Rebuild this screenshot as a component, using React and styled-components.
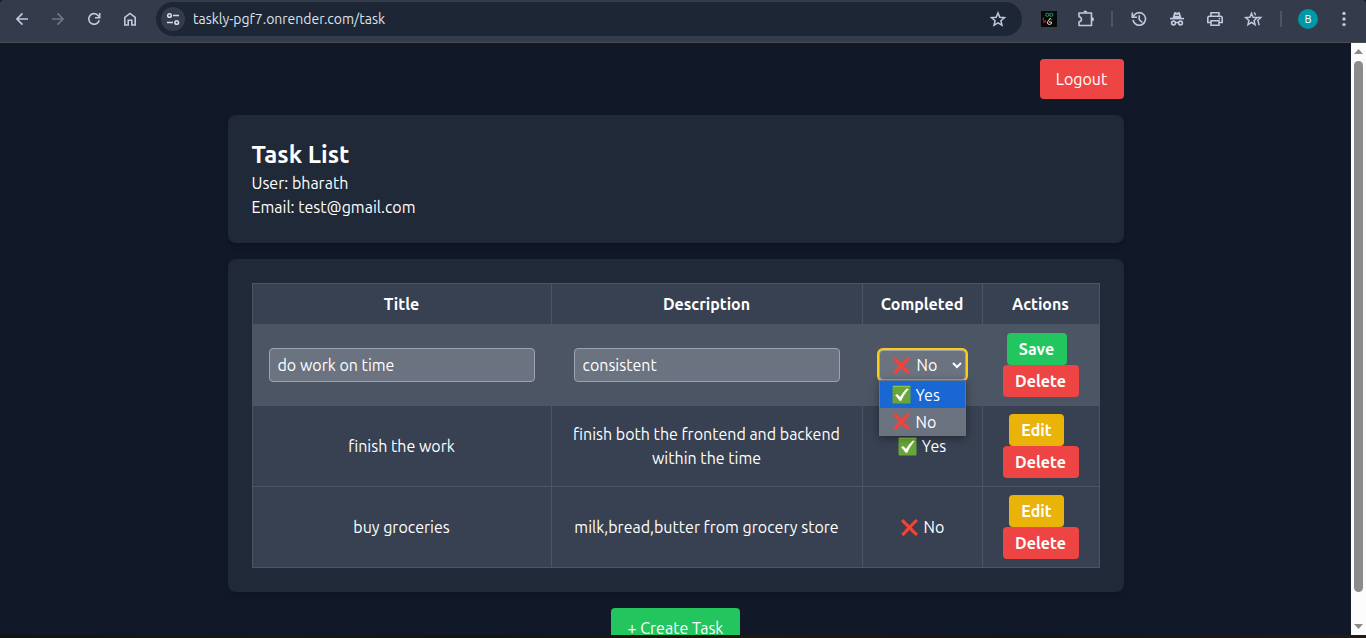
import React, { useState } from "react";
import styled, { createGlobalStyle, css } from "styled-components";

const GlobalStyle = createGlobalStyle`
  *, *::before, *::after { box-sizing: border-box; }
  body {
    margin: 0;
    background: #111827;
    color: #ffffff;
    font: 16px/24px Ubuntu, "Noto Sans", "Open Sans", sans-serif;
  }
  button, input, select { font: inherit; color: inherit; margin: 0; }
  h1, p { margin: 0; }
`;

const Window = styled.div`
  display: flex;
  flex-direction: column;
  height: 100vh;
  overflow: hidden;
`;

/* Browser toolbar */
const Toolbar = styled.header`
  display: flex;
  align-items: center;
  flex: none;
  padding: 2px 4px 6px;
  background: #343c4c;
  border-bottom: 1px solid #4b4d50;
  border-radius: 4px 4px 0 0;
`;

const ToolButton = styled.button`
  display: flex;
  align-items: center;
  justify-content: center;
  flex: none;
  width: ${(p) => (p.$wide ? 38 : 36)}px;
  height: 34px;
  padding: 0;
  border: 0;
  background: none;
  color: ${(p) => (p.$dim ? "#6f7787" : "#c0c9dd")};
`;

const AddressBar = styled.div`
  display: flex;
  align-items: center;
  flex: 1;
  min-width: 0;
  height: 34px;
  margin: 0 8px;
  padding: 0 6px 0 5px;
  border-radius: 17px;
  background: #1d2635;
`;

const SiteInfo = styled.button`
  display: flex;
  flex: none;
  padding: 2px;
  border: 0;
  border-radius: 50%;
  background: #343c4c;
  color: #d5dbe8;
`;

const Address = styled.input`
  flex: 1;
  min-width: 0;
  padding: 0 8px;
  border: 0;
  outline: 0;
  background: none;
  color: #dde2ec;
  font-size: 14px;
`;

const Separator = styled.span`
  flex: none;
  width: 2px;
  height: 16px;
  margin: 0 ${(p) => p.$gap}px;
  background: #4c5568;
`;

const Avatar = styled.span`
  width: 20px;
  height: 20px;
  border-radius: 50%;
  background: #0097a7;
  color: #ffffff;
  font-size: 11px;
  line-height: 20px;
  text-align: center;
`;

/* Page */
const Viewport = styled.div`
  display: flex;
  flex: 1;
  min-height: 0;
`;

const Page = styled.main`
  display: flex;
  flex: 1;
  flex-direction: column;
  align-items: center;
  gap: 16px;
  min-width: 0;
  padding: 16px;
  overflow: hidden;
`;

const Row = styled.div`
  display: flex;
  flex: none;
  justify-content: ${(p) => p.$align};
  width: 100%;
  max-width: 896px;
`;

const MainButton = styled.button`
  width: ${(p) => p.$width}px;
  height: 40px;
  padding: 0;
  border: 0;
  border-radius: 4px;
  background: ${(p) => p.$color};
  white-space: nowrap;
`;

const Card = styled.section`
  flex: none;
  width: 100%;
  max-width: 896px;
  padding: 24px;
  border-radius: 8px;
  background: #1f2937;
  box-shadow: 0 4px 6px -1px rgba(0, 0, 0, 0.1), 0 2px 4px -2px rgba(0, 0, 0, 0.1);
`;

const Heading = styled.h1`
  font-size: 24px;
  line-height: 32px;
  font-weight: 700;
`;

const Table = styled.table`
  width: 100%;
  table-layout: fixed;
  border-collapse: collapse;
  background: #374151;
  text-align: center;
`;

const Column = styled.col`
  width: ${(p) => p.$width || "auto"};
`;

const TaskRow = styled.tr`
  ${(p) => p.$editing && css`background: #4b5563;`}
`;

const HeadCell = styled.th`
  padding: 8px 16px;
  border: 1px solid #4b5563;
  font-weight: 700;
`;

const Cell = styled.td`
  padding: 8px 16px;
  border: 1px solid #4b5563;
`;

const TextField = styled.input`
  display: block;
  width: 100%;
  max-width: 266px;
  height: 34px;
  margin: 0 auto;
  padding: 4px 8px;
  border: 1px solid #9ca3af;
  border-radius: 4px;
  outline: 0;
  background: #6b7280;
`;

const Actions = styled.div`
  display: flex;
  flex-direction: column;
  align-items: center;
`;

const actionColors = { save: "#22c55e", edit: "#eab308", delete: "#ef4444" };
const actionWidths = { save: 60, edit: 55, delete: 76 };

const ActionButton = styled.button`
  width: ${(p) => actionWidths[p.$kind]}px;
  height: 32px;
  margin-right: ${(p) => (p.$kind === "delete" ? 0 : 8)}px;
  padding: 0;
  border: 0;
  border-radius: 4px;
  background: ${(p) => actionColors[p.$kind]};
  font-weight: 700;
`;

const StatusLabel = styled.span`
  display: flex;
  align-items: center;
  justify-content: center;
  gap: 5px;
`;

const Picker = styled.div`
  position: relative;
  width: 87px;
  margin: 0 auto;
`;

const PickerSelect = styled.select`
  display: block;
  width: 100%;
  height: 30px;
  padding: 0 8px 0 37px;
  appearance: none;
  border: 1px solid #9ca3af;
  border-radius: 4px;
  outline: 0;
  background: #6b7280;
  box-shadow: 0 0 0 2px #facc15;
`;

const PickerMark = styled.span`
  position: absolute;
  top: 6px;
  left: 13px;
  display: flex;
  pointer-events: none;
`;

const PickerArrow = styled(PickerMark)`
  top: 10px;
  left: 72px;
`;

const Menu = styled.div`
  position: absolute;
  z-index: 1;
  top: 30px;
  left: 0;
  width: 100%;
  border: 1px solid #6b7280;
  background: #6b7280;
  box-shadow: 0 2px 8px rgba(0, 0, 0, 0.4);
`;

const MenuItem = styled.div`
  display: flex;
  align-items: center;
  gap: 5px;
  height: 27px;
  padding: 0 12px;
  ${(p) => p.$active && css`background: #1967d2;`}
`;

const ScrollTrack = styled.div`
  display: flex;
  flex: none;
  flex-direction: column;
  align-items: center;
  width: 15px;
  padding: 6px 0;
  background: #fcfcfc;
  color: #8b8b8b;
`;

const ScrollThumb = styled.div`
  flex: 1;
  width: 9px;
  margin: 7px 0 32px;
  border-radius: 5px;
  background: #8b8b8b;
`;

const DesktopEdge = styled.div`
  flex: none;
  height: 3px;
  background: linear-gradient(90deg, #10150f, #171a10 20%, #10170f 35%, #201910 55%, #17150f 75%, #211a15);
`;

function Icon({ children, fill = false }) {
  return (
    <svg width="20" height="20" viewBox="0 0 20 20" aria-hidden="true"
      fill={fill ? "currentColor" : "none"} stroke={fill ? "none" : "currentColor"} strokeWidth="1.6">
      {children}
    </svg>
  );
}

function CrossMark() {
  return (
    <svg width="19" height="19" viewBox="0 0 19 19" aria-hidden="true">
      <path d="M1 3.2 3.3 1c2 2.4 4 4.4 6.2 6.2C11.6 5 13.700 3 16 1l2 1.900c-2.300 2.200-4.400 4.400-6.300 6.700 2 2.300 4.100 4.400 6.300 6.200L15.900 18c-2.400-1.900-4.500-4-6.400-6.200C7.500 13.900 5.600 16 3.600 18.300L1.200 16c2.200-2.100 4.200-4.200 6-6.500C5.200 7.500 3.100 5.400 1 3.200Z" fill="#f44336" />
    </svg>
  );
}

function CheckMark() {
  return (
    <svg width="19" height="19" viewBox="0 0 19 19" aria-hidden="true">
      <rect x="0.500" y="0.500" width="18" height="18" rx="1" fill="#68a63a" />
      <path d="M1 1h17v1H1z" fill="#8bc34a" />
      <path d="m3.200 10.200 1.900-1.300 3 3.200c1.900-3.400 4-6.200 6.700-8.700l2 .5c-3.200 3.600-5.600 7.300-7.500 11.800H7.600c-1.200-2-2.700-3.700-4.400-5.500Z" fill="#fff" />
    </svg>
  );
}

function Status({ done }) {
  return (
    <StatusLabel>
      {done ? <CheckMark /> : <CrossMark />}
      {done ? "Yes" : "No"}
    </StatusLabel>
  );
}

function StatusPicker() {
  const [value, setValue] = useState("no");
  return (
    <Picker>
      <PickerSelect aria-label="Completed" value={value} onChange={(e) => setValue(e.target.value)}>
        <option value="yes">Yes</option>
        <option value="no">No</option>
      </PickerSelect>
      <PickerMark>{value === "yes" ? <CheckMark /> : <CrossMark />}</PickerMark>
      <PickerArrow>
        <svg width="12" height="10" viewBox="0 0 12 10" fill="none" stroke="#fff" strokeWidth="2" aria-hidden="true">
          <path d="m2 3 4 4 4-4" />
        </svg>
      </PickerArrow>
      <Menu role="listbox" aria-label="Completed">
        <MenuItem role="option" aria-selected="false" $active onClick={() => setValue("yes")}><CheckMark />Yes</MenuItem>
        <MenuItem role="option" aria-selected="true" onClick={() => setValue("no")}><CrossMark />No</MenuItem>
      </Menu>
    </Picker>
  );
}

function BrowserToolbar() {
  return (
    <Toolbar>
      <ToolButton aria-label="Back"><Icon><path d="M16 10H5M10.500 4.400 4.900 10l5.600 5.600" /></Icon></ToolButton>
      <ToolButton aria-label="Forward" $dim><Icon><path d="M4 10h11M9.500 4.400l5.600 5.600-5.600 5.600" /></Icon></ToolButton>
      <ToolButton aria-label="Reload">
        <Icon><path d="M15.200 11.200A5.300 5.300 0 1 1 13.800 6.200l1.700 1.900M15.700 4v4.700H11" /></Icon>
      </ToolButton>
      <ToolButton aria-label="Home">
        <Icon><path d="M4.800 16V8.300L10 4.400l5.200 3.900V16h-3.400v-4.800H8.200V16Z" /></Icon>
      </ToolButton>
      <AddressBar>
        <SiteInfo aria-label="Site information">
          <Icon>
            <circle cx="6.500" cy="6.500" r="1.800" />
            <path d="M10 6.500h6M4 13.500h6" />
            <circle cx="13.700" cy="13.500" r="1.800" />
          </Icon>
        </SiteInfo>
        <Address aria-label="Address" defaultValue="taskly-pgf7.onrender.com/task" />
        <ToolButton aria-label="Bookmark">
          <Icon><path d="m10 4 1.800 4.300 4.700.4-3.600 3.100 1.100 4.500-4-2.400-4 2.400 1.100-4.500-3.600-3.100 4.700-.4Z" strokeWidth="1.500" /></Icon>
        </ToolButton>
      </AddressBar>
      <ToolButton aria-label="Extension" $wide>
        <svg width="16" height="16" viewBox="0 0 16 16" fill="none" aria-hidden="true">
          <path d="M0 0h16v16H0z" fill="#090909" />
          <circle cx="6.300" cy="3.800" r="1.600" stroke="#16a36a" />
          <circle cx="10.300" cy="3.800" r="1.600" stroke="#16a36a" />
          <path d="M2.800 6.500Q1 9 3.500 10.800M4.300 9v2.200H2.200" stroke="#e02020" />
          <path d="m9.500 7-3 4q-.5 2.500 2 2.500t2-2.500H8" stroke="#e8d9cc" />
          <path d="m9 7.500 1.500 1.500" stroke="#e68a22" />
        </svg>
      </ToolButton>
      <ToolButton aria-label="Extensions">
        <Icon>
          <path d="M3 4h12.500v12.500H3v-3.600c3.200-.2 3.200-5 0-5.200Z" strokeLinejoin="round" />
          <path d="M7.300 3.600a2 2 0 0 1 4 0ZM16 8.300a2 2 0 0 1 0 4Z" fill="currentColor" stroke="none" />
        </Icon>
      </ToolButton>
      <Separator $gap={7} />
      <ToolButton aria-label="History" $wide>
        <Icon><path d="M4 11a6.300 6.300 0 1 0 1.300-5L3.500 8M3.300 3.500v4.700H8M10.200 6.300v4.200l3 3" /></Icon>
      </ToolButton>
      <ToolButton aria-label="Incognito" $wide>
        <Icon>
          <path d="M3 9.600h14" />
          <path d="m5.500 9 1.600-5.400q.3-.7 1-.5l1.900.6 1.900-.6q.7-.2 1 .5L14.500 9Z" fill="currentColor" stroke="none" />
          <path d="M8 6.300h4" stroke="#343c4c" strokeWidth="1" />
          <circle cx="6.500" cy="14" r="1.900" /><circle cx="13.500" cy="14" r="1.900" /><path d="M8.400 13.500h3.200" />
        </Icon>
      </ToolButton>
      <ToolButton aria-label="Print" $wide>
        <Icon>
          <path d="M6 7V3.800h8V7M6 13.500H2.800V9q0-1.800 1.800-1.800h10.800q1.800 0 1.800 1.800v4.500H14M6 11.800h8v4.400H6Z" />
          <circle cx="14.400" cy="9.600" r="0.900" fill="currentColor" stroke="none" />
        </Icon>
      </ToolButton>
      <ToolButton aria-label="Bookmarks" $wide>
        <Icon>
          <path d="m8.500 4.300 1.600 3.900 4.200.4-3.200 2.800.9 4.200-3.500-2.200L5 15.600l.9-4.200-3.200-2.800 4.200-.4Z" strokeWidth="1.500" />
          <path d="m11.300 3.200 1.300 3M14.500 8.400h3.300l-3 2.800 1.400 5" strokeWidth="1.400" />
        </Icon>
      </ToolButton>
      <Separator $gap={8} />
      <ToolButton aria-label="Profile"><Avatar>B</Avatar></ToolButton>
      <ToolButton aria-label="Menu">
        <Icon fill><circle cx="10" cy="4.400" r="1.700" /><circle cx="10" cy="10" r="1.700" /><circle cx="10" cy="15.600" r="1.700" /></Icon>
      </ToolButton>
    </Toolbar>
  );
}

const tasks = [
  { id: 1, title: "do work on time", description: "consistent", done: false, editing: true },
  { id: 2, title: "finish the work", description: "finish both the frontend and backend within the time", done: true },
  { id: 3, title: "buy groceries", description: "milk,bread,butter from grocery store", done: false },
];

export default function App() {
  return (
    <Window>
      <GlobalStyle />
      <BrowserToolbar />
      <Viewport>
        <Page>
          <Row $align="flex-end"><MainButton $width={84} $color="#ef4444">Logout</MainButton></Row>
          <Card>
            <Heading>Task List</Heading>
            <p>User: bharath</p>
            <p>Email: test@gmail.com</p>
          </Card>
          <Card>
            <Table>
              <colgroup>
                <Column $width="299px" />
                <Column />
                <Column $width="120px" />
                <Column $width="117px" />
              </colgroup>
              <thead>
                <tr>
                  <HeadCell>Title</HeadCell>
                  <HeadCell>Description</HeadCell>
                  <HeadCell>Completed</HeadCell>
                  <HeadCell>Actions</HeadCell>
                </tr>
              </thead>
              <tbody>
                {tasks.map((task) => (
                  <TaskRow key={task.id} $editing={task.editing}>
                    <Cell>{task.editing ? <TextField aria-label="Title" defaultValue={task.title} /> : task.title}</Cell>
                    <Cell>{task.editing ? <TextField aria-label="Description" defaultValue={task.description} /> : task.description}</Cell>
                    <Cell>{task.editing ? <StatusPicker /> : <Status done={task.done} />}</Cell>
                    <Cell>
                      <Actions>
                        <ActionButton $kind={task.editing ? "save" : "edit"}>{task.editing ? "Save" : "Edit"}</ActionButton>
                        <ActionButton $kind="delete">Delete</ActionButton>
                      </Actions>
                    </Cell>
                  </TaskRow>
                ))}
              </tbody>
            </Table>
          </Card>
          <Row $align="center"><MainButton $width={129} $color="#22c55e">+ Create Task</MainButton></Row>
        </Page>
        <ScrollTrack aria-hidden="true">
          <svg width="9" height="5" viewBox="0 0 9 5" fill="currentColor"><path d="M0 5 4.500 0 9 5Z" /></svg>
          <ScrollThumb />
          <svg width="9" height="5" viewBox="0 0 9 5" fill="currentColor"><path d="M0 0h9L4.500 5Z" /></svg>
        </ScrollTrack>
      </Viewport>
      <DesktopEdge />
    </Window>
  );
}
